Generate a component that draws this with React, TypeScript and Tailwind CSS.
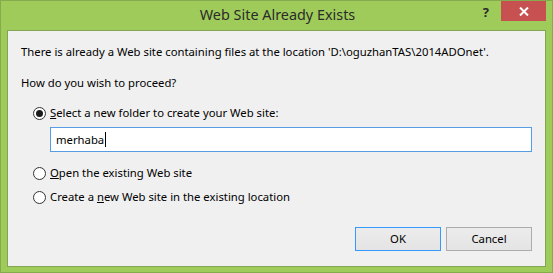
import React from "react";

const font = { fontFamily: '"Noto Sans", "Open Sans", sans-serif' };

function Radio({ checked }: { checked?: boolean }) {
  return (
    <span className="w-[13px] h-[13px] rounded-full border border-[#333333] bg-white flex items-center justify-center shrink-0">
      {checked && <span className="w-[7px] h-[7px] rounded-full bg-[#1a1a1a]" />}
    </span>
  );
}

export default function App() {
  return (
    <div
      className="w-[553px] h-[273px] bg-[#9fcb5a] border border-[#86ab4e] flex flex-col"
      style={font}
    >
      <div className="h-[29px] flex items-start relative shrink-0">
        <div className="flex-1 text-center text-[14.4px] leading-[20px] pt-[4px] text-[#2b2b2b] pl-[2px]">
          Web Site Already Exists
        </div>
        <div className="absolute right-[6px] top-0 flex items-start">
          <span className="text-[13px] font-bold text-[#2b2b2b] leading-[16px] mt-[3px] mr-[12px]">?</span>
          <div className="w-[45px] h-[20px] bg-[#c75050] flex items-center justify-center">
            <svg width="10" height="9" viewBox="0 0 10 9">
              <path d="M1 0.5 L9 8.5 M9 0.5 L1 8.5" stroke="white" strokeWidth="2" />
            </svg>
          </div>
        </div>
      </div>
      <div className="mx-[6px] mb-[5px] flex-1 border border-[#83a553] bg-[#f0f0f0] text-[11.3px] text-black flex flex-col">
        <div className="pl-[13px] pt-[13px] h-[29px] leading-[16px]">
          There is already a Web site containing files at the location 'D:\oguzhanTAS\2014ADOnet'.
        </div>
        <div className="pl-[13px] mt-[15px] h-[16px] leading-[16px]">How do you wish to proceed?</div>
        <div className="pl-[25px] mt-[14px] h-[16px] flex items-center gap-[4px] leading-[16px]">
          <Radio checked />
          <span>
            <span className="underline">S</span>elect a new folder to create your Web site:
          </span>
        </div>
        <div className="ml-[42px] mr-[13px] mt-[6px] h-[25px] bg-white border border-[#569de5] flex items-center pl-[5px] leading-[16px]">
          merhaba<span className="w-px h-[15px] bg-black ml-[1px]" />
        </div>
        <div className="pl-[25px] mt-[13px] h-[16px] flex items-center gap-[4px] leading-[16px]">
          <Radio />
          <span>
            <span className="underline">O</span>pen the existing Web site
          </span>
        </div>
        <div className="pl-[25px] mt-[8px] h-[16px] flex items-center gap-[4px] leading-[16px]">
          <Radio />
          <span>
            Create a <span className="underline">n</span>ew Web site in the existing location
          </span>
        </div>
        <div className="mt-[22px] mr-[13px] flex justify-end gap-[5px]">
          <button className="w-[86px] h-[24px] border border-[#3399ff] bg-gradient-to-b from-[#ececec] to-[#e4e4e4] text-[11.3px] leading-[16px]">
            OK
          </button>
          <button className="w-[86px] h-[24px] border border-[#acacac] bg-gradient-to-b from-[#ececec] to-[#e4e4e4] text-[11.3px] leading-[16px]">
            Cancel
          </button>
        </div>
      </div>
    </div>
  );
}
